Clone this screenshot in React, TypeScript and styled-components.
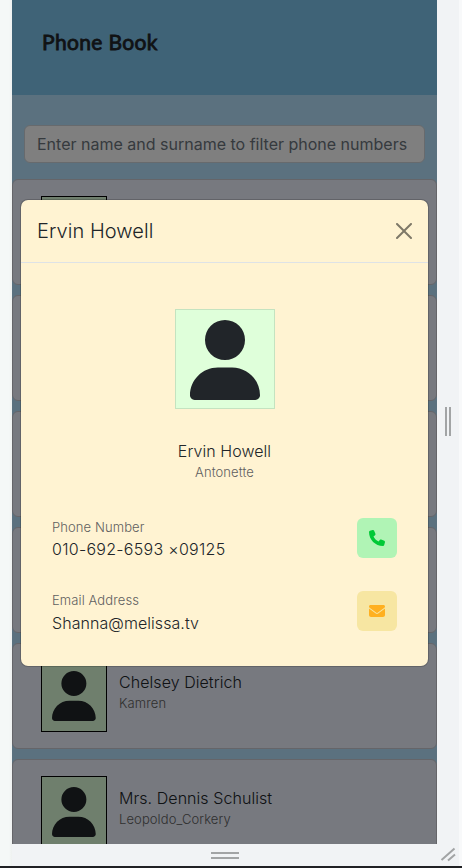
import React from 'react';
import styled, { createGlobalStyle } from 'styled-components';

const GlobalStyle = createGlobalStyle`
  *, *::before, *::after { box-sizing: border-box; }
  body {
    margin: 0;
    overflow: hidden;
    background: #f1f3f5;
    color: #212529;
    font: 300 16px/24px Inter, "Liberation Sans", sans-serif;
  }
  h1, h2, p { margin: 0; font-weight: inherit; }
`;

const Workbench = styled.div`
  position: relative;
  display: grid;
  grid-template-columns: 12px 425px 22px 3px;
  grid-template-rows: 844px 22px;
  height: 868px;
  overflow: hidden;
  border-bottom: 2px solid #202124;
`;

const Gutter = styled.div`
  grid-row: 1 / 3;
  background: linear-gradient(90deg, #f5f8f7 0 75%, #eef1f0);
`;

const EdgeStrip = styled.div`
  grid-row: 1 / 3;
  grid-column: 4;
  background: #f8f9fa;
`;

const Screen = styled.div`
  position: relative;
  overflow: hidden;
  background: #b6e2fe;
`;

const Header = styled.header`
  height: 95px;
  padding: 27px 29px;
  background: #7fc6ee;
`;

const Brand = styled.h1`
  padding-left: 1px;
  font: 400 21px/30px Lato, sans-serif;
  letter-spacing: 0.35px;
  -webkit-text-stroke: 0.8px #212529;
`;

const Search = styled.input`
  display: block;
  width: 401px;
  height: 38px;
  margin: 30px 12px 16px;
  padding: 6px 12px;
  border: 1px solid #ced4da;
  border-radius: 6px;
  background: #fff;
  font: 400 16px/24px Inter, sans-serif;
  &::placeholder { color: #6c757d; opacity: 1; }
`;

const List = styled.div`
  display: flex;
  flex-direction: column;
  gap: 10px;
`;

const Card = styled.article`
  display: flex;
  flex: none;
  height: 106px;
  padding: 16px 28px;
  border: 1px solid #cacbd3;
  border-radius: 6px;
  background: #eef2ff;
`;

const Avatar = styled.div<{ $large?: boolean }>`
  display: flex;
  flex: none;
  align-items: center;
  justify-content: center;
  width: ${(p) => (p.$large ? 100 : 66)}px;
  height: ${(p) => (p.$large ? 100 : 72)}px;
  padding-top: ${(p) => (p.$large ? 2 : 0)}px;
  border: 1px solid ${(p) => (p.$large ? '#c4e3c0' : '#000')};
  background: #dfffda;
  svg { height: ${(p) => (p.$large ? 80 : 50)}px; }
`;

const CardText = styled.div`
  padding: 10px 12px;
`;

const Name = styled.p<{ $spacing?: number }>`
  letter-spacing: ${(p) => p.$spacing ?? 0.06}px;
`;

const Small = styled.p`
  font-size: 13px;
  line-height: 18px;
  letter-spacing: 0.1px;
  color: #606060;
`;

const Backdrop = styled.div`
  position: absolute;
  inset: 0;
  background: rgba(0, 0, 0, 0.5);
`;

const Dialog = styled.section`
  position: absolute;
  top: 199px;
  left: 8px;
  width: 409px;
  height: 468px;
  border: 1px solid rgba(0, 0, 0, 0.175);
  border-radius: 8px;
  background: #fff3d2;
  background-clip: padding-box;
`;

const DialogHeader = styled.div`
  display: flex;
  align-items: center;
  justify-content: space-between;
  height: 63px;
  padding: 0 16px;
  border-bottom: 1px solid #dee2e6;
`;

const DialogTitle = styled.h2`
  font-size: 20px;
  line-height: 30px;
  letter-spacing: 0.06px;
`;

const CloseButton = styled.button`
  display: flex;
  padding: 0;
  border: 0;
  background: none;
  color: #000;
  opacity: 0.5;
`;

const Profile = styled.div`
  display: flex;
  flex-direction: column;
  align-items: center;
  padding-top: 46px;
`;

const ProfileText = styled.div`
  margin: 30px 0 37px;
  text-align: center;
`;

const ContactRow = styled.div`
  display: flex;
  justify-content: space-between;
  height: 40px;
  margin-bottom: 33px;
  padding: 0 31px;
`;

const ContactText = styled.div<{ $gap: number }>`
  display: flex;
  flex-direction: column;
  gap: ${(p) => p.$gap}px;
`;

const Action = styled.button<{ $bg: string; $fg: string }>`
  display: flex;
  align-items: center;
  justify-content: center;
  width: 40px;
  height: 40px;
  border: 0;
  border-radius: 6px;
  background: ${(p) => p.$bg};
  color: ${(p) => p.$fg};
`;

const RightRail = styled.div`
  display: flex;
  align-items: center;
  justify-content: center;
`;

const BottomRail = styled.div`
  grid-column: 2;
  display: flex;
  align-items: center;
  justify-content: center;
`;

const CornerRail = styled.div`
  grid-column: 3;
  display: flex;
`;

const PersonIcon = () => (
  <svg viewBox="0 0 448 512" fill="#212529">
    <path d="M224 256A128 128 0 1 0 224 0a128 128 0 1 0 0 256zm-45.700 48C79.800 304 0 383.800 0 482.300C0 498.700 13.300 512 29.700 512H418.300c16.400 0 29.700-13.300 29.700-29.700C448 383.800 368.200 304 269.700 304H178.300z" />
  </svg>
);

const people = [
  ['Leanne Graham', 'Bret'],
  ['Ervin Howell', 'Antonette'],
  ['Clementine Bauch', 'Samantha'],
  ['Patricia Lebsack', 'Karianne'],
  ['Chelsey Dietrich', 'Kamren'],
  ['Mrs. Dennis Schulist', 'Leopoldo_Corkery'],
];

export default function App() {
  return (
    <Workbench>
      <GlobalStyle />
      <Gutter />
      <Screen>
        <Header><Brand>Phone Book</Brand></Header>
        <Search placeholder="Enter name and surname to filter phone numbers" />
        <List>
          {people.map(([name, user]) => (
            <Card key={user}>
              <Avatar><PersonIcon /></Avatar>
              <CardText>
                <Name>{name}</Name>
                <Small>{user}</Small>
              </CardText>
            </Card>
          ))}
        </List>
        <Backdrop />
        <Dialog>
          <DialogHeader>
            <DialogTitle>Ervin Howell</DialogTitle>
            <CloseButton aria-label="Close">
              <svg width="16" height="16" viewBox="0 0 16 16">
                <path d="M.293.293a1 1 0 0 1 1.414 0L8 6.586 14.293.293a1 1 0 1 1 1.414 1.414L9.414 8l6.293 6.293a1 1 0 0 1-1.414 1.414L8 9.414l-6.293 6.293a1 1 0 0 1-1.414-1.414L6.586 8 .293 1.707a1 1 0 0 1 0-1.414z" />
              </svg>
            </CloseButton>
          </DialogHeader>
          <Profile>
            <Avatar $large><PersonIcon /></Avatar>
            <ProfileText>
              <Name>Ervin Howell</Name>
              <Small>Antonette</Small>
            </ProfileText>
          </Profile>
          <ContactRow>
            <ContactText $gap={1}>
              <Small>Phone Number</Small>
              <Name $spacing={0.28}>010-692-6593 ×09125</Name>
            </ContactText>
            <Action $bg="#b0f4b5" $fg="#00c936" aria-label="Call">
              <svg width="16" height="16" viewBox="0 0 512 512" fill="currentColor">
                <path d="M164.900 24.600c-7.700-18.600-28-28.500-47.400-23.200l-88 24C12.100 30.200 0 46 0 64C0 311.400 200.600 512 448 512c18 0 33.800-12.100 38.600-29.500l24-88c5.300-19.400-4.600-39.700-23.200-47.400l-96-40c-16.300-6.800-35.200-2.100-46.300 11.600L304.700 368C234.300 334.700 177.300 277.700 144 207.300L193.300 167c13.700-11.200 18.400-30 11.600-46.300l-40-96z" />
              </svg>
            </Action>
          </ContactRow>
          <ContactRow>
            <ContactText $gap={2}>
              <Small>Email Address</Small>
              <Name>Shanna@melissa.tv</Name>
            </ContactText>
            <Action $bg="#f7e6a2" $fg="#ffb020" aria-label="Email">
              <svg width="16" height="16" viewBox="0 0 512 512" fill="currentColor">
                <path d="M48 64C21.500 64 0 85.500 0 112c0 15.100 7.100 29.300 19.200 38.400L236.800 313.600c11.400 8.500 27 8.500 38.400 0L492.800 150.400c12.100-9.100 19.200-23.300 19.200-38.400c0-26.500-21.500-48-48-48H48zM0 176V384c0 35.300 28.700 64 64 64H448c35.300 0 64-28.700 64-64V176L294.400 339.200c-22.800 17.100-54 17.100-76.800 0L0 176z" />
              </svg>
            </Action>
          </ContactRow>
        </Dialog>
      </Screen>
      <RightRail>
        <svg width="22" height="30" viewBox="0 0 22 30" stroke="#a2a4a5" strokeWidth="2"><path d="M9 0v29M13 0v29" /></svg>
      </RightRail>
      <BottomRail>
        <svg width="28" height="8" viewBox="0 0 28 8" stroke="#a2a4a5" strokeWidth="2"><path d="M0 2h28M0 7h28" /></svg>
      </BottomRail>
      <CornerRail>
        <svg width="22" height="22" viewBox="0 0 22 22" stroke="#a2a4a5" strokeWidth="2"><path d="M4.500 16L17.500 4.500M11 16.500l7-6" /></svg>
      </CornerRail>
      <EdgeStrip />
    </Workbench>
  );
}
